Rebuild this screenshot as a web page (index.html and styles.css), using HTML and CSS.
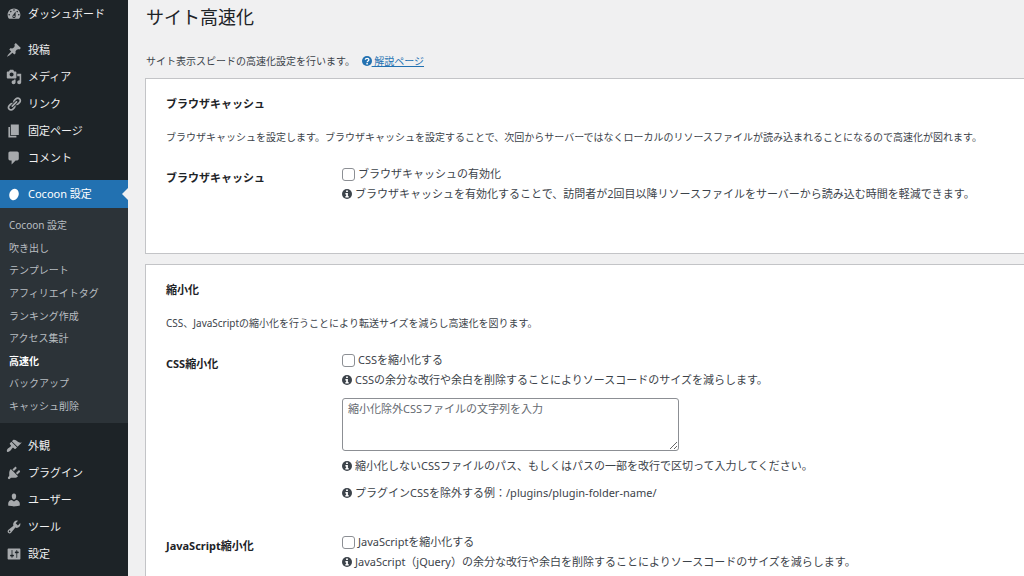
FILE: index.html
```html
<!DOCTYPE html>
<html lang="ja">
<head>
<meta charset="utf-8">
<title>サイト高速化</title>
<link rel="stylesheet" href="styles.css">
</head>
<body>
<svg class="sprite" aria-hidden="true">
  <symbol id="info" viewBox="0 0 20 20"><circle cx="10" cy="10" r="10" fill="currentColor"/><path fill="#fff" d="M8.2 3h3.6v3.2H8.200zM6.800 8h5v6.200h1.500V17H6.800v-2.800h1.500v-3.400H6.800z"/></symbol>
  <symbol id="help" viewBox="0 0 20 20"><circle cx="10" cy="10" r="10" fill="currentColor"/><path fill="none" stroke="#fff" stroke-width="2.600" d="M6.500 7.500c.6-4 7.500-3.600 7.200.3C13.500 10 10.200 9.800 10.200 12.600"/><path fill="#fff" d="M8.700 14h3v3h-3z"/></symbol>
</svg>
<div class="layout">
  <nav class="sidebar">
    <ul class="menu">
      <li><a class="item" href="#"><svg class="icon" viewBox="0 0 20 20"><path d="M3.760 16h12.480c1.100-1.370 1.760-3.110 1.760-5 0-4.420-3.580-8-8-8s-8 3.580-8 8c0 1.890.66 3.630 1.760 5zM10 4c.55 0 1 .45 1 1s-.45 1-1 1-1-.45-1-1 .45-1 1-1zM6 6c.55 0 1 .45 1 1s-.45 1-1 1-1-.45-1-1 .45-1 1-1zm8 0c.55 0 1 .45 1 1s-.45 1-1 1-1-.45-1-1 .45-1 1-1zm-5.370 5.550L12 7v6c0 1.100-.9 2-2 2s-2-.9-2-2c0-.57.24-1.080.63-1.450zM4 10c.55 0 1 .45 1 1s-.45 1-1 1-1-.45-1-1 .45-1 1-1zm12 0c.55 0 1 .45 1 1s-.45 1-1 1-1-.45-1-1 .45-1 1-1zm-5 3c0-.55-.45-1-1-1s-1 .45-1 1 .45 1 1 1 1-.45 1-1z"/></svg>ダッシュボード</a></li>
    </ul>
    <ul class="menu">
      <li><a class="item" href="#"><svg class="icon" viewBox="0 0 20 20"><path d="M10.440 3.020l1.820-1.820 6.360 6.350-1.830 1.820c-1.050-.68-2.480-.57-3.410.36l-.75.75c-.92.93-1.040 2.350-.35 3.410l-1.830 1.820-2.410-2.410-2.800 2.790c-.42.42-3.380 2.710-3.800 2.290s1.860-3.390 2.280-3.810l2.790-2.790L4.100 9.360l1.830-1.820c1.050.69 2.480.57 3.400-.36l.75-.75c.93-.92 1.050-2.350.36-3.410z"/></svg>投稿</a></li>
      <li><a class="item" href="#"><svg class="icon" viewBox="0 0 20 20"><path d="M13 11V4c0-.55-.45-1-1-1h-1.670L9 1H5L3.670 3H2c-.55 0-1 .45-1 1v7c0 .55.45 1 1 1h10c.55 0 1-.45 1-1zM7 4.500c1.380 0 2.500 1.120 2.500 2.500S8.380 9.500 7 9.500 4.500 8.380 4.500 7 5.620 4.500 7 4.500zM14 6h5v10.500c0 1.380-1.120 2.500-2.500 2.500S14 17.880 14 16.500s1.120-2.500 2.500-2.500c.17 0 .34.02.5.05V9h-3V6zm-4 8.050V13h2v3.500c0 1.380-1.120 2.500-2.500 2.500S7 17.880 7 16.500 8.120 14 9.500 14c.17 0 .34.02.5.05z"/></svg>メディア</a></li>
      <li><a class="item" href="#"><svg class="icon" viewBox="0 0 20 20"><path d="M17.740 2.760c1.680 1.690 1.680 4.410 0 6.100l-1.530 1.520c-1.120 1.120-2.700 1.470-4.140 1.090l2.620-2.610.76-.77.76-.76c.84-.84.84-2.200 0-3.040-.84-.85-2.200-.85-3.040 0l-.77.76-3.380 3.380c-.37-1.440-.02-3.020 1.100-4.140l1.520-1.530c1.690-1.680 4.420-1.680 6.100 0zM8.590 13.430l5.340-5.340c.42-.42.42-1.100 0-1.520-.44-.43-1.130-.39-1.530 0l-5.330 5.340c-.42.42-.42 1.100 0 1.520.44.43 1.130.39 1.520 0zm-.76 2.290l4.140-4.150c.38 1.440.03 3.020-1.090 4.140l-1.520 1.530c-1.690 1.680-4.410 1.680-6.100 0-1.680-1.680-1.680-4.420 0-6.100l1.530-1.520c1.120-1.120 2.700-1.470 4.140-1.100l-4.140 4.150c-.85.84-.85 2.200 0 3.050.84.84 2.200.84 3.040 0z"/></svg>リンク</a></li>
      <li><a class="item" href="#"><svg class="icon" viewBox="0 0 20 20"><path d="M6 15V2h10v13H6zm-1 1h8v2H3V5h2v11z"/></svg>固定ページ</a></li>
      <li><a class="item" href="#"><svg class="icon" viewBox="0 0 20 20"><path d="M5 2h9c1.100 0 2 .9 2 2v7c0 1.100-.9 2-2 2h-2l-5 5v-5H5c-1.100 0-2-.9-2-2V4c0-1.100.9-2 2-2z"/></svg>コメント</a></li>
    </ul>
    <ul class="menu">
      <li>
        <a class="item current" href="#"><svg class="icon" viewBox="0 0 20 20"><ellipse cx="10" cy="10.500" rx="5.800" ry="7.300" transform="rotate(20 10 10.500)"/></svg>Cocoon 設定</a>
        <ul class="submenu">
          <li><a href="#">Cocoon 設定</a></li>
          <li><a href="#">吹き出し</a></li>
          <li><a href="#">テンプレート</a></li>
          <li><a href="#">アフィリエイトタグ</a></li>
          <li><a href="#">ランキング作成</a></li>
          <li><a href="#">アクセス集計</a></li>
          <li><a class="selected" href="#">高速化</a></li>
          <li><a href="#">バックアップ</a></li>
          <li><a href="#">キャッシュ削除</a></li>
        </ul>
      </li>
    </ul>
    <ul class="menu">
      <li><a class="item" href="#"><svg class="icon" viewBox="0 0 20 20"><path d="M14.480 11.060L7.410 3.990l1.500-1.500c.5-.56 2.300-.47 3.510.32 1.210.8 1.430 1.280 2.910 2.100 1.180.64 2.450 1.260 4.450.85zm-.71.71L6.700 4.700 4.930 6.470c-.39.39-.39 1.020 0 1.410l1.060 1.060c.39.39.39 1.030 0 1.420-.6.6-1.430 1.110-2.210 1.690-.35.26-.7.53-1.010.84C1.430 14.230.4 16.080 1.400 17.070c.99 1 2.840-.03 4.180-1.360.31-.31.58-.66.85-1.020.57-.78 1.080-1.610 1.690-2.210.39-.39 1.020-.39 1.410 0l1.060 1.060c.39.39 1.020.39 1.410 0z"/></svg>外観</a></li>
      <li><a class="item" href="#"><svg class="icon" viewBox="0 0 20 20"><path d="M13.110 4.360L9.870 7.600 8 5.730l3.240-3.240c.35-.34 1.050-.2 1.560.32.52.51.66 1.210.31 1.550zm-8 1.770l.91-1.120 9.010 9.010-1.190.84c-.71.71-2.630 1.160-3.820 1.160H6.140L4.900 17.260c-.59.59-1.540.59-2.120 0-.59-.58-.59-1.530 0-2.120l1.240-1.240v-3.880c0-1.130.4-3.190 1.090-3.890zm7.260 3.970l3.240-3.240c.34-.35 1.040-.21 1.550.31.52.51.66 1.210.31 1.550l-3.240 3.250z"/></svg>プラグイン</a></li>
      <li><a class="item" href="#"><svg class="icon" viewBox="0 0 20 20"><path d="M10 9.250c-2.270 0-2.730-3.440-2.730-3.440C7 4.020 7.820 2 9.970 2c2.160 0 2.980 2.020 2.710 3.810 0 0-.41 3.440-2.680 3.440zm0 2.570L12.720 10c2.390 0 4.520 2.330 4.520 4.530v2.490s-3.650 1.130-7.240 1.130c-3.650 0-7.240-1.130-7.240-1.130v-2.490c0-2.250 1.940-4.480 4.470-4.480z"/></svg>ユーザー</a></li>
      <li><a class="item" href="#"><svg class="icon" viewBox="0 0 20 20"><path d="M16.680 9.770c-1.340 1.340-3.300 1.670-4.950.99l-5.410 6.520c-.99.99-2.590.99-3.580 0s-.99-2.590 0-3.570l6.520-5.420c-.68-1.650-.35-3.610.99-4.950 1.280-1.280 3.120-1.620 4.720-1.060l-2.890 2.890 2.820 2.820 2.860-2.870c.53 1.580.18 3.390-1.080 4.650zM3.810 16.210c.4.39 1.040.39 1.430 0 .4-.4.4-1.040 0-1.430-.39-.4-1.030-.4-1.430 0-.39.39-.39 1.030 0 1.430z"/></svg>ツール</a></li>
      <li><a class="item" href="#"><svg class="icon" viewBox="0 0 20 20"><path d="M18 16V4c0-.55-.45-1-1-1H3c-.55 0-1 .45-1 1v12c0 .55.45 1 1 1h14c.55 0 1-.45 1-1zM8 11h1c.55 0 1 .45 1 1s-.45 1-1 1H8v1.500c0 .28-.22.5-.5.5s-.5-.22-.5-.5V13H6c-.55 0-1-.45-1-1s.45-1 1-1h1V5.500c0-.28.22-.5.5-.5s.5.22.5.5V11zm5-2h-1c-.55 0-1-.45-1-1s.45-1 1-1h1V5.500c0-.28.22-.5.5-.5s.5.22.5.5V7h1c.55 0 1 .45 1 1s-.45 1-1 1h-1v5.500c0 .28-.22.5-.5.5s-.5-.22-.5-.5V9z"/></svg>設定</a></li>
    </ul>
  </nav>
  <main class="content">
    <h1 class="title">サイト高速化</h1>
    <p class="intro">サイト表示スピードの高速化設定を行います。 <a class="help" href="#"><svg class="mark"><use href="#help"/></svg> 解説ページ</a></p>

    <section class="panel">
      <h2 class="heading">ブラウザキャッシュ</h2>
      <p class="desc">ブラウザキャッシュを設定します。ブラウザキャッシュを設定することで、次回からサーバーではなくローカルのリソースファイルが読み込まれることになるので高速化が図れます。</p>
      <div class="row">
        <h3 class="name">ブラウザキャッシュ</h3>
        <div class="field">
          <label class="check"><input type="checkbox">ブラウザキャッシュの有効化</label>
          <p class="hint"><svg class="mark"><use href="#info"/></svg>ブラウザキャッシュを有効化することで、訪問者が2回目以降リソースファイルをサーバーから読み込む時間を軽減できます。</p>
        </div>
      </div>
    </section>

    <section class="panel">
      <h2 class="heading">縮小化</h2>
      <p class="desc">CSS、JavaScriptの縮小化を行うことにより転送サイズを減らし高速化を図ります。</p>
      <div class="row">
        <h3 class="name">CSS縮小化</h3>
        <div class="field">
          <label class="check"><input type="checkbox">CSSを縮小化する</label>
          <p class="hint"><svg class="mark"><use href="#info"/></svg>CSSの余分な改行や余白を削除することによりソースコードのサイズを減らします。</p>
          <textarea class="exclude" aria-label="縮小化除外CSSファイル" placeholder="縮小化除外CSSファイルの文字列を入力"></textarea>
          <p class="hint">
            <svg class="mark"><use href="#info"/></svg>縮小化しないCSSファイルのパス、もしくはパスの一部を改行で区切って入力してください。</p>
          <p class="hint example"><svg class="mark"><use href="#info"/></svg>プラグインCSSを除外する例：/plugins/plugin-folder-name/</p>
        </div>
      </div>
      <div class="row">
        <h3 class="name">JavaScript縮小化</h3>
        <div class="field">
          <label class="check"><input type="checkbox">JavaScriptを縮小化する</label>
          <p class="hint"><svg class="mark"><use href="#info"/></svg>JavaScript（jQuery）の余分な改行や余白を削除することによりソースコードのサイズを減らします。</p>
        </div>
      </div>
    </section>
  </main>
</div>
</body>
</html>
```
FILE: styles.css
```css
* { box-sizing: border-box; }

body {
  margin: 0;
  height: 100vh;
  overflow: hidden;
  background: #f0f0f1;
  color: #3c434a;
  font: 11px/20px "Noto Sans", "Noto Sans CJK JP", sans-serif;
}

h1, h2, h3, p, ul { margin: 0; padding: 0; }
ul { list-style: none; }

.sprite { display: none; }

.layout {
  display: grid;
  grid-template-columns: 128px minmax(0, 1fr);
  min-height: 100vh;
}

/* Sidebar */
.sidebar { background: #1d2327; }
.menu + .menu { margin-top: 9px; }

.item {
  position: relative;
  display: flex;
  align-items: center;
  gap: 6px;
  height: 27px;
  padding-left: 6px;
  color: #f0f0f1;
  text-decoration: none;
}

.icon {
  width: 16px;
  height: 16px;
  fill: #a7aaad;
}

.current {
  height: 28px;
  background: #2271b1;
  color: #fff;
}
.current .icon { fill: #fff; }
.current::after {
  content: "";
  position: absolute;
  right: 0;
  top: 50%;
  transform: translateY(-50%);
  border: 6px solid transparent;
  border-left: 0;
  border-right-color: #f0f0f1;
}

.submenu {
  display: flex;
  flex-direction: column;
  min-height: 215px;
  padding: 6px 9px;
  background: #2c3338;
  font-size: 10px;
}
.submenu li {
  flex: 1;
  display: flex;
  align-items: center;
}
.submenu a {
  color: #b9bec2;
  text-decoration: none;
}
.submenu .selected {
  color: #fff;
  font-weight: 700;
}

/* Content */
.content {
  min-width: 0;
  padding: 5px 0 0 17px;
}

.title {
  padding-left: 1px;
  font-size: 18px;
  font-weight: 400;
  line-height: 24px;
  color: #1d2327;
}

.intro {
  margin: 22px 0 7px;
  padding-left: 1px;
  font-size: 10px;
}
.help {
  margin-left: 4px;
  color: #2271b1;
}

.mark {
  width: 10px;
  height: 10px;
  margin-right: 3px;
  vertical-align: -1px;
}
.help .mark { margin-right: 0; }

.panel {
  padding: 15px 0 49px 20px;
  border: 1px solid #c3c4c7;
  border-right: 0;
  background: #fff;
}
.panel + .panel { margin-top: 10px; }

.heading, .name {
  font-size: 11px;
  font-weight: 700;
  line-height: 20px;
  color: #1d2327;
}

.desc {
  margin: 13px 0 17px;
  font-size: 10px;
}

.row {
  display: grid;
  grid-template-columns: 176px minmax(0, 1fr);
}
.row + .row { margin-top: 29px; }
.name { padding-top: 4px; }

.check {
  display: flex;
  align-items: center;
  gap: 3px;
}
.check input {
  appearance: none;
  width: 13px;
  height: 13px;
  margin: 0;
  border: 1px solid #8c8f94;
  border-radius: 3px;
  background: #fff;
}

.exclude {
  display: block;
  width: 337px;
  max-width: 100%;
  height: 53px;
  margin: 8px 0 5px;
  padding: 0 5px;
  border: 1px solid #8c8f94;
  border-radius: 3px;
  background: #fff;
  font: inherit;
}
.exclude::placeholder { color: #646970; }

.example { margin-top: 7px; }
```
